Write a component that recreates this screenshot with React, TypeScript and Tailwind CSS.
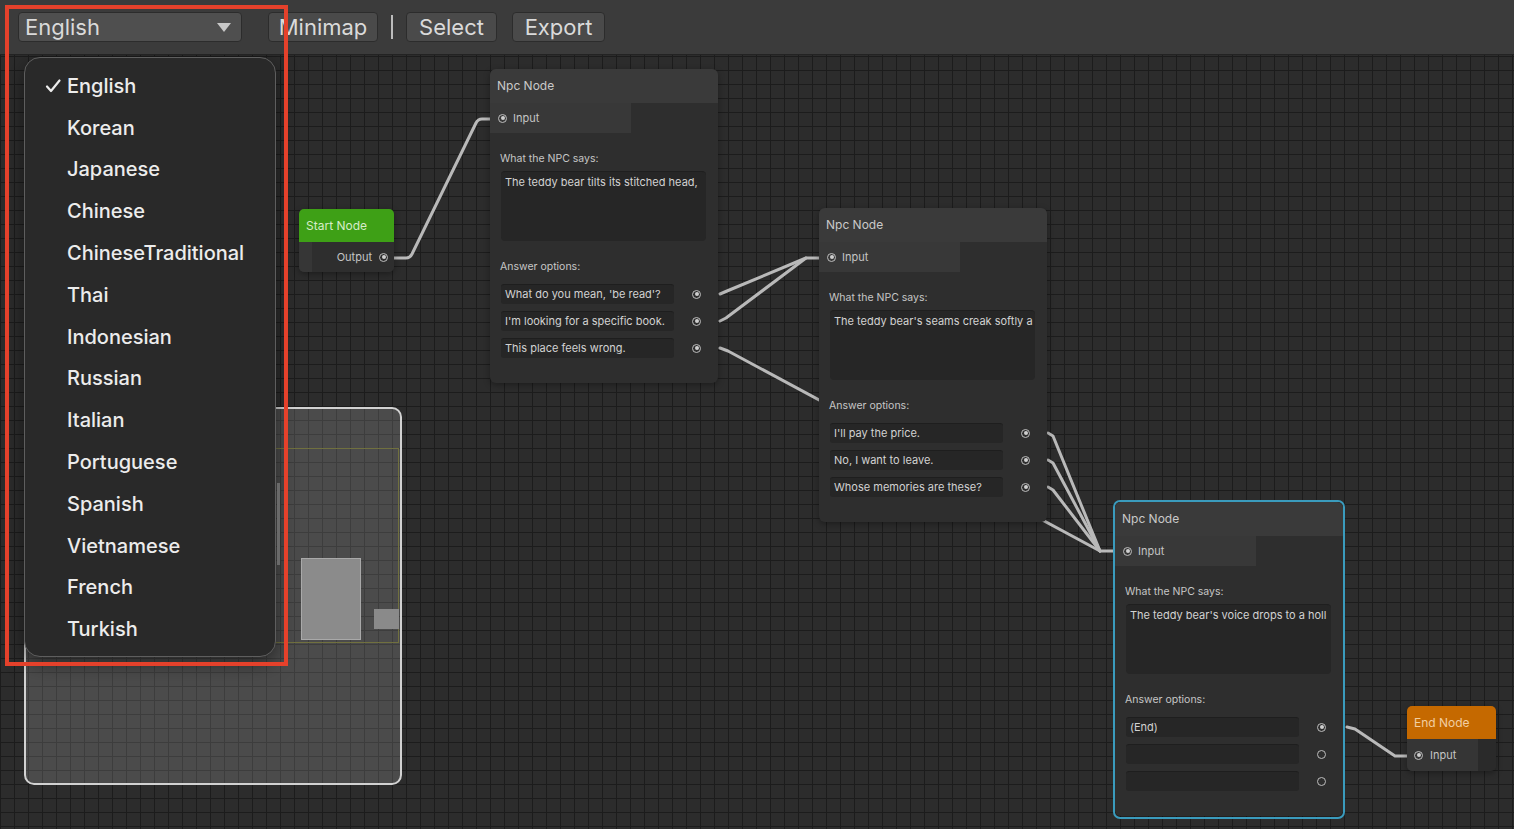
import React from "react";

type NpcNodeProps = {
  left: number;
  top: number;
  text: string;
  options: string[];
};

const languages = [
  "English",
  "Korean",
  "Japanese",
  "Chinese",
  "ChineseTraditional",
  "Thai",
  "Indonesian",
  "Russian",
  "Italian",
  "Portuguese",
  "Spanish",
  "Vietnamese",
  "French",
  "Turkish",
];

const Port: React.FC<{ filled?: boolean }> = ({ filled = true }) => (
  <div className="w-[9px] h-[9px] rounded-full border-[1.5px] border-[#bdbdbd] flex items-center justify-center shrink-0">
    {filled && <div className="w-[4px] h-[4px] rounded-full bg-[#cfcfcf]" />}
  </div>
);

const NpcNode: React.FC<NpcNodeProps> = ({ left, top, text, options }) => (
  <div
    className="absolute w-[228px] rounded-[6px] bg-[#2e2e2e] shadow-[0_2px_6px_rgba(0,0,0,0.35)] overflow-hidden"
    style={{ left, top }}
  >
    {/* header */}
    <div className="h-[34px] bg-[#3a3a3a] flex items-center px-[7px] text-[12px] text-[#c9c9c9]">Npc Node</div>
    {/* input port row */}
    <div className="flex h-[30px]">
      <div className="w-[141px] bg-[#383838] flex items-center gap-[6px] pl-[8px] text-[11px] text-[#c4c4c4]">
        <Port />
        <span>Input</span>
      </div>
    </div>
    <div className="pl-[10px] pr-[12px] pt-[20px] pb-[25px]">
      <div className="h-[12px] leading-[12px] text-[10.5px] text-[#c6c6c6]">What the NPC says:</div>
      <div className="mt-[6px] ml-[1px] h-[70px] rounded-[4px] bg-[#262626] border-t border-[#1f1f1f] px-[4px] pt-[2px] text-[11px] text-[#d2d2d2] whitespace-nowrap">
        {text}
      </div>
      <div className="mt-[20px] h-[12px] leading-[12px] text-[10.5px] text-[#c6c6c6]">Answer options:</div>
      <div className="mt-[11px] flex flex-col gap-[7px]">
        {options.map((opt, i) => (
          <div key={i} className="flex items-center">
            <div className="ml-[1px] w-[173px] h-[20px] rounded-[3px] bg-[#262626] border-t border-[#1e1e1e] flex items-center px-[4px] text-[11px] text-[#d2d2d2] whitespace-nowrap">
              {opt}
            </div>
            <div className="ml-[18px]">
              <Port filled={opt !== ""} />
            </div>
          </div>
        ))}
      </div>
    </div>
  </div>
);

const App: React.FC = () => {
  return (
    <div className="relative w-[1514px] h-[829px] overflow-hidden bg-[#2c2c2c] font-['Inter',sans-serif] bg-[linear-gradient(to_right,#1c1c1c_1px,transparent_1px),linear-gradient(to_bottom,#1c1c1c_1px,transparent_1px)] bg-[size:14px_14px]">
      {/* toolbar */}
      <div className="relative z-10 h-[55px] bg-[#3b3b3b] border-b border-[#232323] flex items-center pl-[18px] text-[#dadada]">
        <div className="w-[224px] h-[30px] rounded-[4px] bg-[#4f4f4f] border border-[#2c2c2c] flex items-center justify-between pl-[6px] pr-[10px]">
          <span className="text-[22px] leading-none">English</span>
          <svg width="14" height="9" viewBox="0 0 14 9">
            <path d="M0 0 L14 0 L7 9 Z" fill="#c8c8c8" />
          </svg>
        </div>
        <div className="ml-[26px] w-[110px] h-[30px] rounded-[4px] bg-[#4a4a4a] border border-[#2c2c2c] flex items-center justify-center text-[22px] leading-none">
          Minimap
        </div>
        <div className="ml-[13px] w-[2px] h-[24px] bg-[#bcbcbc]" />
        <div className="ml-[13px] w-[91px] h-[30px] rounded-[4px] bg-[#4a4a4a] border border-[#2c2c2c] flex items-center justify-center text-[22px] leading-none">
          Select
        </div>
        <div className="ml-[15px] w-[93px] h-[30px] rounded-[4px] bg-[#4a4a4a] border border-[#2c2c2c] flex items-center justify-center text-[22px] leading-none">
          Export
        </div>
      </div>

      {/* edges */}
      <svg className="absolute left-0 top-0" width="1514" height="829" fill="none" stroke="#b9b9b9" strokeWidth="3" strokeLinejoin="round" strokeLinecap="round">
        <path d="M394 258 L406 258 Q410 258 412 254 L476 123 Q478 119 482 119 L490 119" />
        <path d="M720 294 L727 291 L806 258 L819 258" />
        <path d="M720 321 L726 318 L806 258" />
        <path d="M720 348 L728 351 L1100 551 L1113 551" />
        <path d="M1048 433 L1053 436 L1100 551" />
        <path d="M1048 460 L1053 463 L1100 551" />
        <path d="M1048 487 L1053 490 L1100 551" />
        <path d="M1347 727 L1355 729 L1395 756 L1407 756" />
      </svg>

      {/* start node */}
      <div className="absolute left-[299px] top-[209px] w-[95px] rounded-[5px] overflow-hidden shadow-[0_2px_6px_rgba(0,0,0,0.35)]">
        <div className="h-[33px] bg-[#3ea016] flex items-center px-[7px] text-[12px] text-[#d6ecc9]">Start Node</div>
        <div className="flex h-[30px] bg-[#2e2e2e]">
          <div className="w-[13px] bg-[#363636]" />
          <div className="flex-1 flex items-center justify-end gap-[7px] pr-[6px] text-[11px] text-[#c4c4c4]">
            <span>Output</span>
            <Port />
          </div>
        </div>
      </div>

      <NpcNode
        left={490}
        top={69}
        text="The teddy bear tilts its stitched head,"
        options={["What do you mean, 'be read'?", "I'm looking for a specific book.", "This place feels wrong."]}
      />
      <NpcNode
        left={819}
        top={208}
        text="The teddy bear's seams creak softly a"
        options={["I'll pay the price.", "No, I want to leave.", "Whose memories are these?"]}
      />
      <div className="absolute left-[1113px] top-[500px] w-[232px] h-[319px] rounded-[7px] border-2 border-[#3a9bbd] overflow-hidden">
        <NpcNode
          left={0}
          top={0}
          text="The teddy bear's voice drops to a holl"
          options={["(End)", "", ""]}
        />
      </div>

      {/* end node */}
      <div className="absolute left-[1407px] top-[706px] w-[89px] rounded-[5px] overflow-hidden shadow-[0_2px_6px_rgba(0,0,0,0.35)]">
        <div className="h-[33px] bg-[#c56900] flex items-center px-[7px] text-[12px] text-[#f2cfa2]">End Node</div>
        <div className="flex h-[32px] bg-[#2a2a2a]">
          <div className="w-[71px] bg-[#353535] flex items-center gap-[7px] pl-[7px] text-[11px] text-[#c4c4c4]">
            <Port />
            <span>Input</span>
          </div>
        </div>
      </div>

      {/* minimap */}
      <div className="absolute left-[24px] top-[407px] w-[378px] h-[378px] rounded-[10px] border-2 border-[#d2d2d2] bg-white/15 overflow-hidden">
        <div className="absolute left-0 right-[1px] top-[39px] h-[195px] border border-[#70703f]" />
        <div className="absolute left-[275px] top-[149px] w-[60px] h-[82px] bg-[#8b8b8b] border border-[#a9a9a9]" />
        <div className="absolute left-[348px] top-[200px] w-[25px] h-[20px] bg-[#8a8a8a]" />
      </div>

      {/* language dropdown menu */}
      <div className="absolute left-[24px] top-[57px] w-[252px] h-[600px] rounded-[16px] border border-[#5e5e5e] bg-[#292929] shadow-[0_6px_20px_rgba(0,0,0,0.5)] pt-[7px] text-[#ececec]">
        {languages.map((lang, i) => (
          <div key={lang} className="relative h-[41.8px] flex items-center pl-[42px] text-[20px] font-medium">
            {i === 0 && (
              <svg className="absolute left-[20px]" width="16" height="16" viewBox="0 0 16 16" fill="none" stroke="#ececec" strokeWidth="2.2" strokeLinecap="round" strokeLinejoin="round">
                <path d="M2 8.5 L6 13 L14.5 2.5" />
              </svg>
            )}
            {lang}
          </div>
        ))}
      </div>
      <div className="absolute left-[277px] top-[483px] w-[3px] h-[82px] bg-[#6a6a6a]" />

      {/* red highlight */}
      <div className="absolute left-[5px] top-[5px] w-[283px] h-[661px] border-[4px] border-[#e5412b] z-20" />
    </div>
  );
};

export default App;
